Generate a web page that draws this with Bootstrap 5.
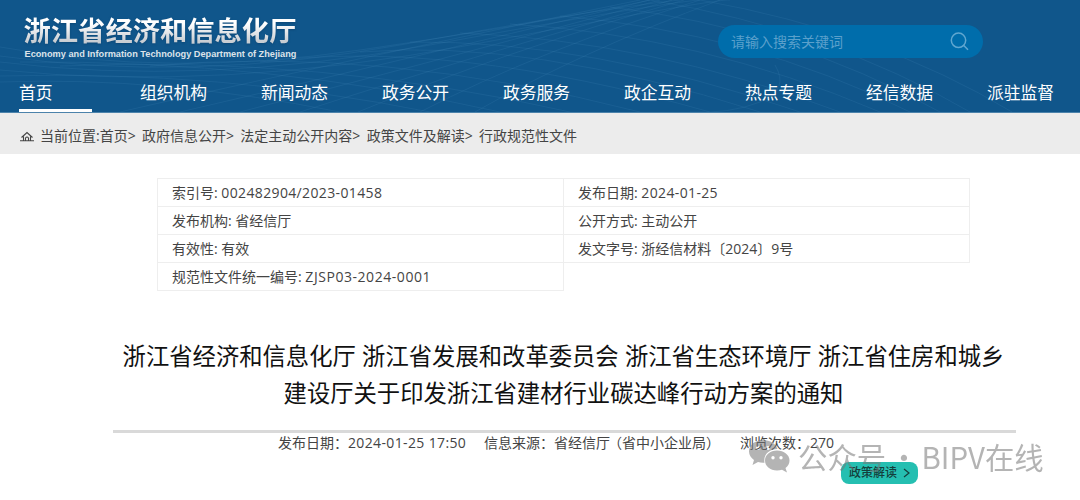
<!DOCTYPE html>
<html lang="zh-CN">
<head>
<meta charset="utf-8">
<title>浙江省经济和信息化厅</title>
<link rel="stylesheet" href="https://cdn.jsdelivr.net/npm/bootstrap@5.3.0/dist/css/bootstrap.min.css">
<style>
body{font-family:"Open Sans","Noto Sans CJK SC",sans-serif;font-size:14px;color:#444;height:500px;overflow:hidden;background:#fff}
.site-head{height:113px;background:#10568b;border-bottom:1px solid #4c83ab}
.waves{left:0;top:0;z-index:0}
.brand-name{font:700 27.3px/36px "Noto Sans CJK SC",sans-serif;background:linear-gradient(#fff 35%,#c8cdd2 85%);-webkit-background-clip:text;background-clip:text;color:transparent;filter:drop-shadow(0 1px 1px #0a3c6688);margin:-1px 0 1px -1px}
.brand-en{font:700 9.2px/12px "Liberation Sans",sans-serif;color:#dce3ea;white-space:nowrap}
.brand-box{padding:12px 0 0 24.500px}
.search{width:265px;height:33px;margin:25px 97px 0 0;background:#006dab;color:#5ba0cb;padding:0 14px 0 13px}
.main-nav{padding-left:19px;height:32px}
.main-nav a{width:121px;flex:none;font-size:16.8px;line-height:25px;color:#fff;text-decoration:none;white-space:nowrap}
.main-nav a.active::after{content:"";display:block;width:73px;height:3px;background:#fff;margin-top:4px}
.crumbs{height:41px;background:#ececec;padding:12px 0 0 20px;white-space:pre;word-spacing:2.7px}
.crumbs svg{margin-right:6px;position:relative;top:-1px}
.meta-grid{width:813px;margin:24px 0 0 157px;display:grid;grid-template-columns:406px 406px;border-left:1px solid #eee;border-top:1px solid #eee}
.meta-grid div{height:28px;line-height:27px;padding-left:14px;border-right:1px solid #eee;border-bottom:1px solid #eee}
.num{letter-spacing:.36px}
.code{letter-spacing:.55px}
.doc-title{margin:46px 0 0;font:400 23.33px/37px "Noto Sans CJK SC",sans-serif;color:#111;width:1127px;text-align:center;white-space:nowrap;word-spacing:1px}
.doc-rule{width:903px;height:3px;background:#d9d9d9;margin:19px 0 0 113px}
.doc-info{padding-left:278px;height:22px;line-height:20px;white-space:nowrap}
.doc-info>span{flex:none}
.policy{left:841px;top:462px;width:77px;height:22px;border-radius:8px;background:#25bfb1;color:#143f3c;font-size:12px;font-weight:500;padding:0 8px}
.wmark{left:749px;top:438px;color:#777;opacity:.55;font:400 29.4px/36px "Noto Sans CJK SC",sans-serif;word-spacing:-3.6px}
.wmark svg{margin-right:-1px}
</style>
</head>
<body>
<header class="site-head position-relative d-flex flex-column justify-content-between">
<svg class="waves position-absolute" width="1080" height="112" fill="none" stroke="#4e93c3" stroke-opacity=".15" stroke-width="1">
<path d="M0 47Q170 78 360 50T650 0M0 56Q190 83 400 45T680 0M0 62Q200 87 430 45T700 0M0 70Q220 92 470 45T730 0"/>
<path d="M120 112Q300 70 640 0M180 112Q360 70 650 0M240 112Q420 65 660 0M300 112Q460 60 672 0M358 112Q500 53 684 0M420 112Q540 50 700 0M475 112Q580 52 720 0"/>
<path d="M0 82Q160 76 340 112M0 76Q220 70 430 112M20 62Q270 60 500 112M60 66Q320 55 570 112M150 66Q380 45 640 112M260 62Q450 38 710 112M360 52Q530 38 760 112M410 42Q590 40 800 112M460 33Q650 40 840 112M510 24Q700 35 880 112M560 16Q750 32 910 112M610 7Q790 28 940 112M650 0Q830 30 970 112M700 0Q880 32 1012 112"/>
<path d="M775 65Q790 90 760 102T690 112"/>
</svg>
<div class="d-flex justify-content-between position-relative">
<div class="brand-box"><div class="brand-name">浙江省经济和信息化厅</div><div class="brand-en">Economy and Information Technology Department of Zhejiang</div></div>
<div class="search rounded-pill d-flex align-items-center justify-content-between"><span>请输入搜索关键词</span>
<svg width="19" height="19" viewBox="0 0 19 19" fill="none" stroke="#60a7d0" stroke-width="1.5"><circle cx="8.5" cy="8.3" r="7.2"/><path d="M13.8 13.4L18 17.8"/></svg></div>
</div>
<nav class="main-nav d-flex position-relative"><a class="active" href="#">首页</a><a href="#">组织机构</a><a href="#">新闻动态</a><a href="#">政务公开</a><a href="#">政务服务</a><a href="#">政企互动</a><a href="#">热点专题</a><a href="#">经信数据</a><a href="#">派驻监督</a></nav>
</header>
<div class="crumbs"><svg width="14" height="11" viewBox="0 0 14 11" fill="none" stroke="#444" stroke-width="1.1"><path d="M1.500 6.500L7 1.500L12.500 6.500M3.500 5.500V9.500M10.500 5.500V9.500M0 9.800H14M5.500 9.500V7Q7 5 8.500 7V9.500"/></svg>当前位置:首页&gt; 政府信息公开&gt; 法定主动公开内容&gt; 政策文件及解读&gt; 行政规范性文件</div>
<main>
<section class="meta-grid">
<div>索引号: <span class="num">002482904/2023-01458</span></div><div>发布日期: <span class="num">2024-01-25</span></div>
<div>发布机构: 省经信厅</div><div>公开方式: 主动公开</div>
<div>有效性: 有效</div><div>发文字号: 浙经信材料〔2024〕9号</div>
<div>规范性文件统一编号: <span class="code">ZJSP03-2024-0001</span></div>
</section>
<h1 class="doc-title">浙江省经济和信息化厅 浙江省发展和改革委员会 浙江省生态环境厅 浙江省住房和城乡<br>建设厅关于印发浙江省建材行业碳达峰行动方案的通知</h1>
<div class="doc-rule"></div>
<div class="doc-info d-flex"><span style="width:206px">发布日期：<span class="num">2024-01-25 17:50</span></span><span style="width:256px">信息来源：省经信<span style="letter-spacing:-2px">厅</span>（省中小企业局）</span><span>浏览次数：270</span></div>
</main>
<a href="#" class="policy position-absolute d-flex align-items-center justify-content-between text-decoration-none"><span>政策解读</span><svg width="7" height="10" fill="none" stroke="#143f3c" stroke-width="1.2"><path d="M1 1L6 5L1 9"/></svg></a>
<div class="wmark position-absolute d-flex text-nowrap">
<svg width="50" height="36" viewBox="0 0 50 36" fill="#777"><path fill-rule="evenodd" d="M14 2C6 2 0 7 0 13.500C0 17 2 20 5 22L3.500 27L9 24Q12 25 15.500 24.700C14 16 21 11 28.500 11C27 5.500 21 2 14 2ZM9 8a2 2 0 1 1 0 4a2 2 0 1 1 0-4ZM19 8a2 2 0 1 1 0 4a2 2 0 1 1 0-4Z"/><path fill-rule="evenodd" d="M28 12.500C21 12.500 16 17 16 22.500S21 32.500 28 32.500Q31 32.500 33 31.700L38 34.500L36.500 30C39 28 40.500 25.500 40.500 22.500C40.500 17 35 12.500 28 12.500ZM24 18a1.700 1.700 0 1 1 0 3.400a1.700 1.700 0 1 1 0-3.400ZM32 18a1.700 1.700 0 1 1 0 3.400a1.700 1.700 0 1 1 0-3.400Z"/></svg>
<span>公众号 · BIPV在线</span></div>
<script src="https://cdn.jsdelivr.net/npm/bootstrap@5.3.0/dist/js/bootstrap.bundle.min.js"></script>
</body>
</html>
